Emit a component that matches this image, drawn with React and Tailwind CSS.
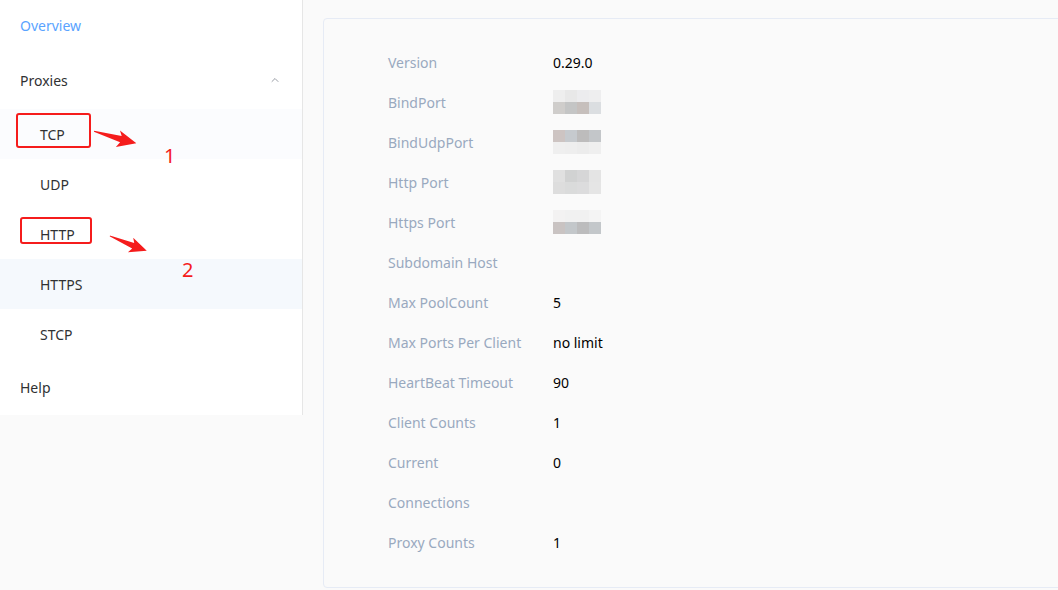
import { ChevronUp } from "lucide-react";

const ROWS = [
  ["Version", "0.29.0"],
  ["BindPort", "blur-a"],
  ["BindUdpPort", "blur-b"],
  ["Http Port", "blur-c"],
  ["Https Port", "blur-d"],
  ["Subdomain Host", ""],
  ["Max PoolCount", "5"],
  ["Max Ports Per Client", "no limit"],
  ["HeartBeat Timeout", "90"],
  ["Client Counts", "1"],
  ["Current", "0"],
  ["Connections", ""],
  ["Proxy Counts", "1"],
];

// pixelated (mosaic) cells for hidden port numbers
const BLURS = {
  "blur-a": [
    ["#eeeeee", "#e8e8e8", "#ececee", "#eeeeef"],
    ["#cfcdcb", "#c4c5c5", "#c6bfbc", "#dbdee1"],
  ],
  "blur-b": [
    ["#cdc4c2", "#c6cace", "#bdbcbc", "#c3c6c9"],
    ["#efefef", "#eeeeee", "#ececec", "#efefef"],
  ],
  "blur-c": [
    ["#e0e0e0", "#d1d2d2", "#d6d6d7", "#e4e4e4"],
    ["#dddddd", "#dadbdb", "#dcdcdd", "#e5e5e5"],
  ],
  "blur-d": [
    ["#f3f2f2", "#f1f1f1", "#f1f1f1", "#f4f4f4"],
    ["#c9c3c2", "#c3c7ca", "#bcbcbd", "#c3c7ca"],
  ],
};

function Mosaic({ cells }) {
  return (
    <div className="flex flex-col">
      {cells.map((row, i) => (
        <div key={i} className="flex">
          {row.map((c, j) => (
            <div key={j} className="w-[12px] h-[12px]" style={{ background: c }} />
          ))}
        </div>
      ))}
    </div>
  );
}

function Arrow({ className }) {
  return (
    <svg className={className} viewBox="0 0 44 18" width="44" height="18">
      <path d="M0 7 L28 5.5 L25 0.5 L44 9 L25 17.5 L28 12 L0 8 Z" fill="#f51c1c" />
    </svg>
  );
}

export default function App() {
  const sub = ["TCP", "UDP", "HTTP", "HTTPS", "STCP"];
  return (
    <div
      className="relative w-[1058px] h-[590px] overflow-hidden bg-[#fafafa] flex items-start text-[14px]"
      style={{ fontFamily: '"Noto Sans", "Open Sans", sans-serif' }}
    >
      {/* Sidebar */}
      <aside className="w-[303px] shrink-0 bg-white border-r border-[#e6e6e6] text-[#303133]">
        <div className="h-[51px] pl-5 flex items-center text-[#5aa3ff]">Overview</div>
        <div className="h-[58px] pl-5 pr-[21px] flex items-center justify-between">
          <span>Proxies</span>
          <ChevronUp className="w-[12px] h-[12px] text-[#9a9ea6]" strokeWidth={2} />
        </div>
        {sub.map((s) => (
          <div
            key={s}
            className={`h-[50px] pl-10 flex items-center ${
              s === "HTTPS" ? "bg-[#f5f9fd]" : s === "TCP" ? "bg-[#fbfcfe]" : ""
            }`}
          >
            {s}
          </div>
        ))}
        <div className="h-[56px] pl-5 flex items-center">Help</div>
      </aside>

      {/* Main */}
      <main className="pl-5 pt-[18px]">
        <div className="w-[760px] bg-[#fafafa] border border-[#e6ebf5] rounded-[4px] pl-[64px] pt-[23px] pb-[25px]">
          {ROWS.map(([label, value]) => (
            <div key={label} className="h-[40px] flex items-center">
              <div className="w-[165px] text-[#99a9bf]">{label}</div>
              <div className="text-black">
                {BLURS[value] ? <Mosaic cells={BLURS[value]} /> : value}
              </div>
            </div>
          ))}
        </div>
      </main>

      {/* Annotations */}
      <div className="absolute left-[16px] top-[113px] w-[75px] h-[35px] border-2 border-[#f51c1c] rounded-[3px]" />
      <Arrow className="absolute left-[93px] top-[129px] rotate-[14deg]" />
      <div className="absolute left-[164px] top-[146px] text-[20px] text-[#f51c1c] leading-none">1</div>

      <div className="absolute left-[20px] top-[217px] w-[72px] h-[27px] border-2 border-[#f51c1c] rounded-[3px]" />
      <Arrow className="absolute left-[108px] top-[235px] rotate-[20deg] w-[40px]" />
      <div className="absolute left-[182px] top-[260px] text-[20px] text-[#f51c1c] leading-none">2</div>
    </div>
  );
}
